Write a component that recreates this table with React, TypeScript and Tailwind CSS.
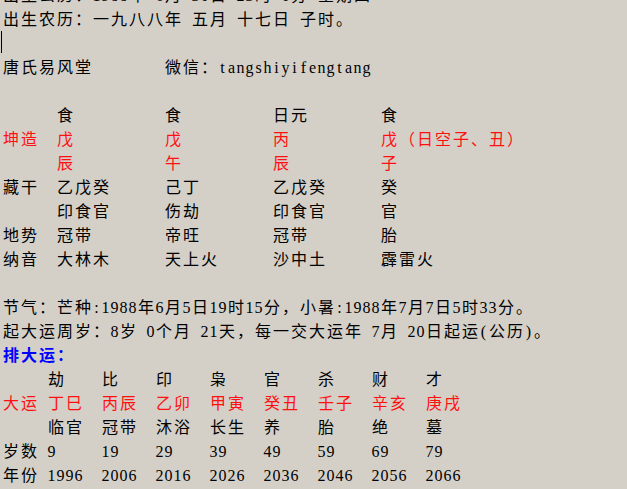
import React from "react";

const isWide = (ch: string) => ch.charCodeAt(0) > 0x2000;

function Txt({ s }: { s: string }) {
  return (
    <>
      {Array.from(s).map((ch, i) =>
        isWide(ch) ? (
          <span
            key={i}
            className="inline-block w-[18px] text-center font-['Noto_Sans_CJK_SC',sans-serif]"
          >
            {ch}
          </span>
        ) : (
          <span
            key={i}
            className="inline-block w-[9px] text-center font-['Liberation_Serif','Noto_Sans_CJK_SC',serif]"
          >
            {ch === " " ? "\u00a0" : ch}
          </span>
        )
      )}
    </>
  );
}

function Line({ s, className = "" }: { s: string; className?: string }) {
  return (
    <div className={`h-[24px] whitespace-nowrap ${className}`}>
      <Txt s={s} />
    </div>
  );
}

const top: { label: string; cells: string[]; red?: boolean }[] = [
  { label: "", cells: ["食", "食", "日元", "食"] },
  { label: "坤造", cells: ["戊", "戊", "丙", "戊（日空子、丑）"], red: true },
  { label: "", cells: ["辰", "午", "辰", "子"], red: true },
  { label: "藏干", cells: ["乙戊癸", "己丁", "乙戊癸", "癸"] },
  { label: "", cells: ["印食官", "伤劫", "印食官", "官"] },
  { label: "地势", cells: ["冠带", "帝旺", "冠带", "胎"] },
  { label: "纳音", cells: ["大林木", "天上火", "沙中土", "霹雷火"] },
];

const bottom: { label: string; cells: string[]; red?: boolean }[] = [
  { label: "", cells: ["劫", "比", "印", "枭", "官", "杀", "财", "才"] },
  { label: "大运", cells: ["丁巳", "丙辰", "乙卯", "甲寅", "癸丑", "壬子", "辛亥", "庚戌"], red: true },
  { label: "", cells: ["临官", "冠带", "沐浴", "长生", "养", "胎", "绝", "墓"] },
  { label: "岁数", cells: ["9", "19", "29", "39", "49", "59", "69", "79"] },
  { label: "年份", cells: ["1996", "2006", "2016", "2026", "2036", "2046", "2056", "2066"] },
];

export default function App() {
  return (
    <div className="h-[489px] w-full overflow-hidden bg-[#d4d0c8] pl-[2px] text-[16px] leading-[24px] text-black font-['Noto_Sans_CJK_SC',sans-serif]">
      <div className="-mt-[18px]">
        <Line s="出生公历：1988年 6月 30日 23时 0分 星期四" />
        <Line s="出生农历：一九八八年 五月 十七日 子时。" />
        <div className="h-[24px]">
          <span className="-ml-[1px] mt-[1px] inline-block h-[22px] w-[1px] bg-black align-top" />
        </div>
        <Line s="唐氏易风堂        微信：tangshiyifengtang" />
        <div className="h-[24px]" />
        <div className="grid grid-cols-[54px_108px_108px_108px_auto]">
          {top.map((row, r) => (
            <React.Fragment key={r}>
              <div className={`h-[24px] whitespace-nowrap ${row.red ? "text-[#ff1010]" : ""}`}>
                <Txt s={row.label} />
              </div>
              {row.cells.map((c, i) => (
                <div key={i} className={`h-[24px] whitespace-nowrap ${row.red ? "text-[#ff1010]" : ""}`}>
                  <Txt s={c} />
                </div>
              ))}
            </React.Fragment>
          ))}
        </div>
        <div className="h-[24px]" />
        <Line s="节气：芒种:1988年6月5日19时15分，小暑:1988年7月7日5时33分。" />
        <Line s="起大运周岁：8岁 0个月 21天，每一交大运年 7月 20日起运(公历)。" />
        <Line s="排大运：" className="font-bold text-[#0000ff]" />
        <div className="grid grid-cols-[45px_repeat(8,54px)]">
          {bottom.map((row, r) => (
            <React.Fragment key={r}>
              <div className={`h-[24px] whitespace-nowrap ${row.red ? "text-[#ff1010]" : ""}`}>
                <Txt s={row.label} />
              </div>
              {row.cells.map((c, i) => (
                <div key={i} className={`h-[24px] whitespace-nowrap ${row.red ? "text-[#ff1010]" : ""}`}>
                  <Txt s={c} />
                </div>
              ))}
            </React.Fragment>
          ))}
        </div>
      </div>
    </div>
  );
}
